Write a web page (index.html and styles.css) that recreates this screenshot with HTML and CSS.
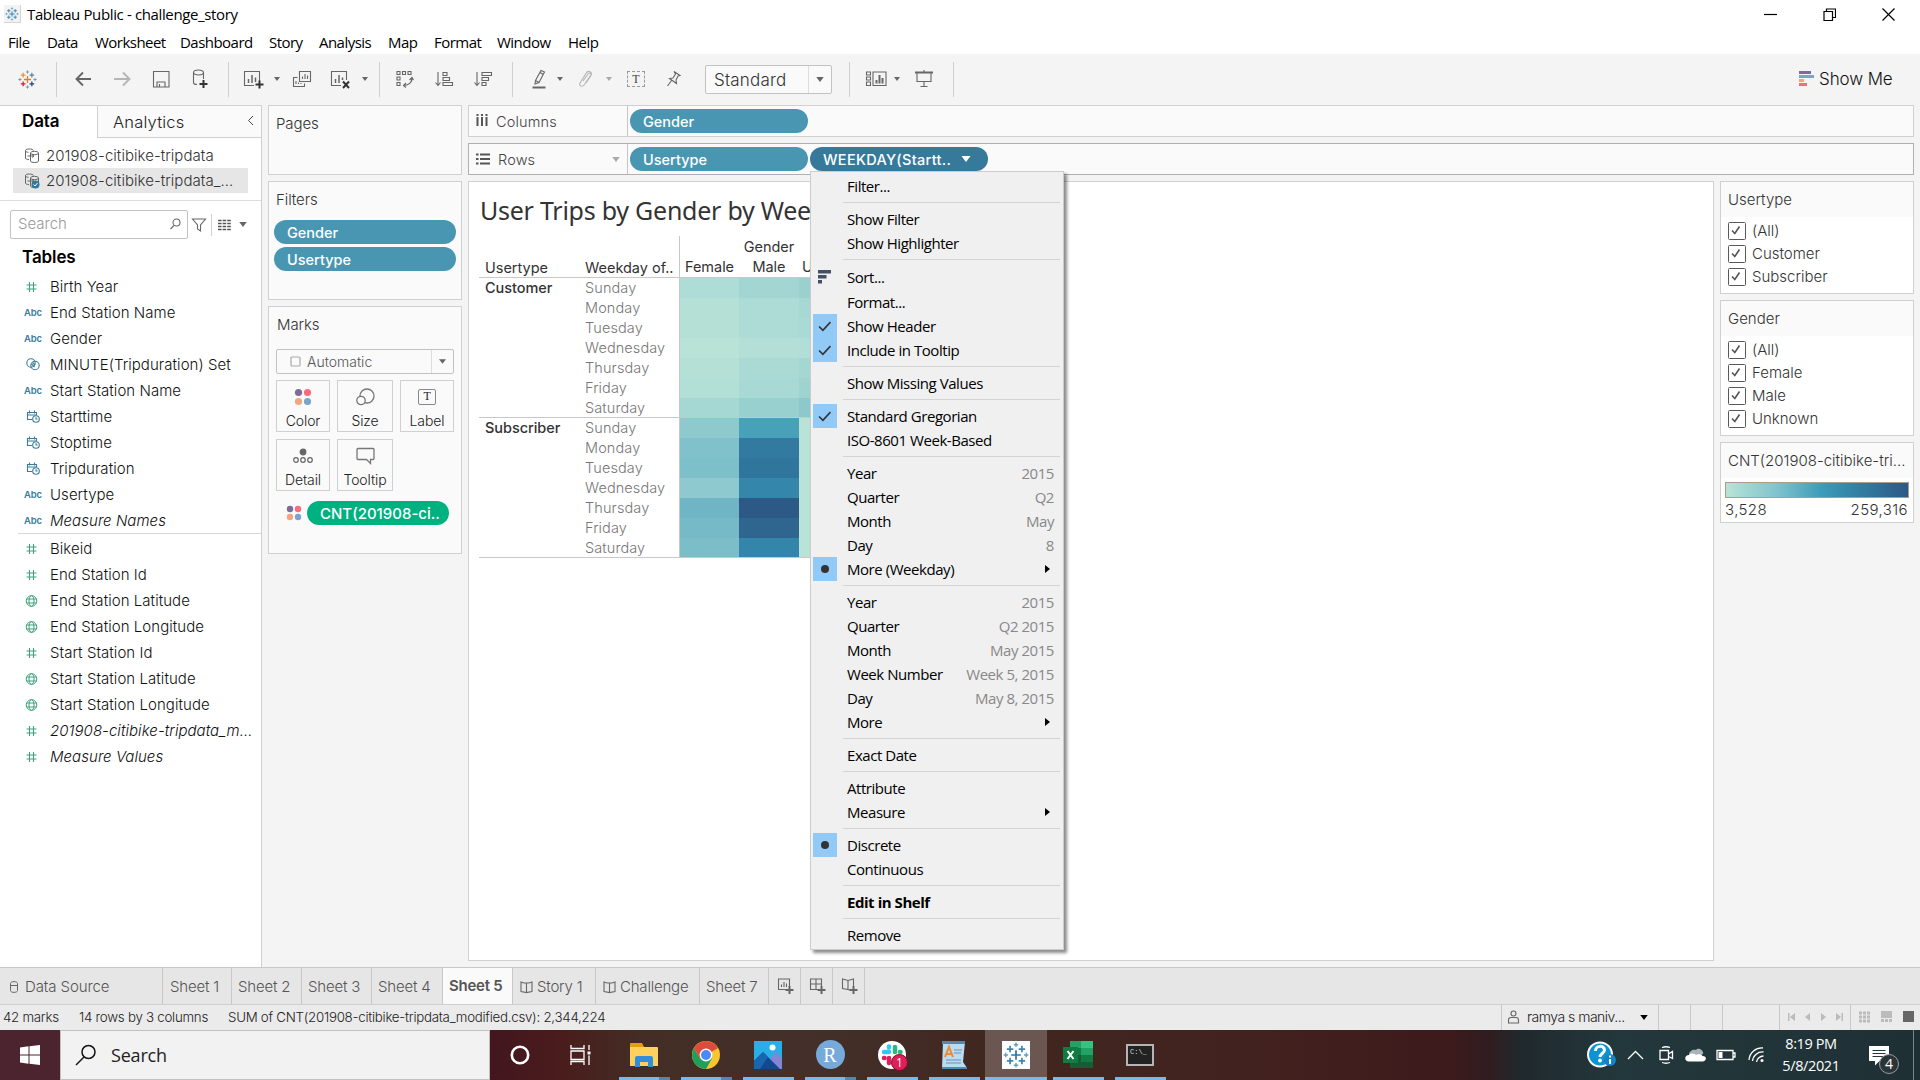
FILE: index.html
```html
<!DOCTYPE html>
<html lang="en">
<head>
<meta charset="utf-8">
<title>Tableau Public - challenge_story</title>
<link rel="stylesheet" href="styles.css">
</head>
<body>
<svg class="defs" width="0" height="0">
  <symbol id="caret" viewBox="0 0 6 4"><path d="M0 0h6L3 4z" fill="currentColor"/></symbol>
  <symbol id="hash" viewBox="0 0 12 12"><path d="M4 1v10M8 1v10M1 4h10M1 8h10" stroke="#3fa37c" stroke-width="1.1" fill="none"/></symbol>
  <symbol id="globe" viewBox="0 0 12 12"><g stroke="#3fa37c" fill="none"><circle cx="6" cy="6" r="5.300"/><ellipse cx="6" cy="6" rx="2.500" ry="5.300"/><path d="M1.200 4h9.600M1.200 8h9.600"/></g></symbol>
  <symbol id="sets" viewBox="0 0 14 13"><g stroke="#3a7c9c" fill="none" stroke-width="1.1"><circle cx="5" cy="5" r="4.2"/><circle cx="9" cy="7.5" r="4.2"/><path d="M5.500 6l3 3M6.500 4.500l2.500 2.500"/></g></symbol>
  <symbol id="datetime" viewBox="0 0 14 13"><g stroke="#3a7c9c" fill="none" stroke-width="1.1"><path d="M6 9.500H1.500V2.500h9V5M1.500 5h9M3.500 .5v3M8.500 .5v3"/><circle cx="10" cy="9" r="3.300"/><path d="M10 7.300V9h1.600"/></g></symbol>
  <symbol id="tab-logo" viewBox="0 0 24 24"><g fill="none" stroke="var(--a)" stroke-width="1.600"><path d="M12 7.500v9M7.500 12h9"/><path d="M6.500 3.500v6M3.500 6.500h6" stroke="var(--b)"/><path d="M17.500 3.500v6M14.500 6.500h6" stroke="var(--c)"/><path d="M6.500 14.500v6M3.500 17.500h6" stroke="var(--d)"/><path d="M17.500 14.500v6M14.500 17.500h6" stroke="var(--e)"/><path d="M12 .5v4M10 2.500h4M12 19.500v4M10 21.500h4M2.500 10v4M.5 12h4M21.500 10v4M19.500 12h4" stroke="var(--f)" stroke-width="1.200"/></g></symbol>
  <symbol id="source" viewBox="0 0 16 16"><g fill="none" stroke="#666" stroke-width="1"><path d="M5 12C3 12 1.500 11.500 1.500 10.500V3C1.500 1 9 1 9.500 3M1.500 3c0 1.500 2 1.800 3 1.800"/><ellipse cx="10.500" cy="5.500" rx="4" ry="1.700"/><path d="M6.500 5.500v8c0 2 8 2 8 0v-8M3.500 8.500h6M8 7l2 1.500L8 10"/></g></symbol>
  <symbol id="book" viewBox="0 0 13 14"><path d="M1 2l3 1h2.500v9.500L1 11.500zM12 2L9 3H6.500v9.500l5.500-1z" fill="none" stroke="#666" stroke-width="1.100"/></symbol>
  <symbol id="dots4" viewBox="0 0 18 18"><circle cx="4.500" cy="4.500" r="3.600" fill="#7f6b99"/><circle cx="13.500" cy="4.500" r="3.600" fill="#fb6b7e"/><circle cx="4.500" cy="13.500" r="3.600" fill="#f4a57c"/><circle cx="13.500" cy="13.500" r="3.600" fill="#7ba3cf"/></symbol>
  <symbol id="check" viewBox="0 0 12 10"><path d="M1 5l3.500 3.500L11.500 1" fill="none" stroke="#333" stroke-width="1.500"/></symbol>
  <symbol id="boxcheck" viewBox="0 0 18 18"><rect x=".5" y=".5" width="17" height="17" rx="1" fill="#fff" stroke="#595959"/><path d="M4 8.500l2.800 3L11.500 4.500" fill="none" stroke="#555" stroke-width="1.600"/></symbol>
</svg>

<header class="titlebar">
  <span class="app-icon"><svg class="logo-blue" width="14" height="16"><use href="#tab-logo"/></svg></span>
  <span class="title">Tableau Public - challenge_story</span>
  <span class="winbtns">
    <svg width="13" height="13"><path d="M0 6.500h13" stroke="#000" stroke-width="1.200"/></svg>
    <svg width="13" height="13" fill="none" stroke="#000"><path d="M1 3.500h8.500v9H1zM3.500 3.500V1h9v8.500H9.500" stroke-width="1.200"/></svg>
    <svg width="13" height="13"><path d="M.5.5l12 12M12.500.5l-12 12" stroke="#000" stroke-width="1.200"/></svg>
  </span>
</header>
<nav class="menubar"><span>File</span><span>Data</span><span>Worksheet</span><span>Dashboard</span><span>Story</span><span>Analysis</span><span>Map</span><span>Format</span><span>Window</span><span>Help</span></nav>

<div class="toolbar">
  <svg class="logo-color" width="19" height="19"><use href="#tab-logo"/></svg>
  <i class="sep"></i>
  <svg width="17" height="16" class="ic thick"><path d="M16 8H2M8 1.500L1.500 8 8 14.500"/></svg>
  <svg width="17" height="16" class="ic thick dim"><path d="M0 8h15M9 1.500L15.500 8 9 14.500"/></svg>
  <svg width="17" height="17" class="ic"><path d="M.5.500h15.500v15.500H.5zM4 16v-5h8v5M6.500 13v3"/></svg>
  <svg width="17" height="20" class="ic"><path d="M1.500 3.500v10c0 1 1.500 2 3.500 2M11.500 3.500V10"/><ellipse cx="6.500" cy="3.500" rx="5" ry="2.500"/><path d="M11.500 11v8M7.500 15h8" stroke="#333" stroke-width="2"/></svg>
  <i class="sep"></i>
  <svg width="20" height="19" class="ic"><path d="M10 15.500H.5V1.500h15V11"/><path d="M4.500 13V9M8 13V5M11.500 12V7.500" stroke-width="1.500"/><path d="M15.500 10.500v8M11.500 14.500h8" stroke="#333" stroke-width="2"/></svg>
  <svg width="6" height="4" class="caret"><use href="#caret"/></svg>
  <svg width="18" height="18" class="ic"><path d="M6.500 1.500h11v10h-11zM4.500 7.500h-4v9h11v-3M9.500 9V6.500M12 9V4M14.500 9V5.500M3 14v-3M5.500 14v-1.500M8 14v-1"/></svg>
  <svg width="20" height="19" class="ic"><path d="M10 15.500H.5V1.500h15V10"/><path d="M4.500 13V9M8 13V5M11.500 10V7.500" stroke-width="1.500"/><path d="M12 11.500l6 6.500M18 11.500L12 18" stroke="#333" stroke-width="2"/></svg>
  <svg width="6" height="4" class="caret"><use href="#caret"/></svg>
  <i class="sep"></i>
  <svg width="18" height="18" class="ic"><path d="M1 1.500h3v3H1zM6.500 1.500h3v3h-3zM12 1.500h3v3h-3zM1 7h3v3H1zM1 12.500h3v3H1zM16 8c.5 4-3 7-8 7.500M13.500 10L16 7.500l1.500 2.500M10 13l-2.500 2.500 2.500 2"/></svg>
  <svg width="19" height="16" class="ic"><path d="M3 1v13M.5 11.500L3 14.500l2.500-3M8 1.500h4v3H8zM8 6.500h6.500v3H8zM8 11.500h9.500v3H8z"/></svg>
  <svg width="19" height="16" class="ic"><path d="M3 1v13M.5 11.500L3 14.500l2.500-3M8 1.500h9.500v3H8zM8 6.500h6.500v3H8zM8 11.500h4v3H8z"/></svg>
  <i class="sep"></i>
  <svg width="16" height="20" class="ic"><path d="M4.500 11.500L10 1.500l3.500 1.500L8 13.500 4 15zM4.500 11.500L8 13.500M9 3.500l3.500 2"/><path d="M1.500 18.500h13" stroke-width="2"/></svg>
  <svg width="6" height="4" class="caret"><use href="#caret"/></svg>
  <svg width="15" height="18" class="ic dim"><path d="M5 11l5-7c1.500-2 4-.5 2.500 1.500L6 15c-2 2.500-5.500.5-4-2L8 3.500C10-.5 15 2 13 5.500L8 13"/></svg>
  <svg width="6" height="4" class="caret dim"><use href="#caret"/></svg>
  <span class="tbox">T</span>
  <svg width="16" height="18" class="ic"><path d="M8 1.500l6 4-2 .5-2 4 .5 3.500-7-5 3.500-.5 2.500-4zM5.500 10.500L1.500 16"/></svg>
  <span class="select fit"><span>Standard</span><i><svg width="8" height="5" class="caret"><use href="#caret"/></svg></i></span>
  <i class="sep"></i>
  <svg width="21" height="16" class="ic"><path d="M.5 1h4v3h-4zM.5 6h4v3h-4zM.5 11h4v3.500h-4zM7 1h13v13.500H7z"/><path d="M10.500 12.500V9M13.500 12.500V4M16.500 12.500V7" stroke-width="2"/></svg>
  <svg width="6" height="4" class="caret"><use href="#caret"/></svg>
  <svg width="18" height="18" class="ic"><path d="M0 2.500h18" stroke-width="2"/><path d="M2 3v8.500h14V3M9 12v4.500M5.500 16.500h7M9 0v2"/></svg>
  <i class="sep"></i>
  <span class="showme"><svg width="15" height="16"><path fill="#7f6b99" d="M0 0h12v3H0z"/><path fill="#7ba3cf" d="M0 4h15v3H0z"/><path fill="#f4a57c" d="M0 8h5v3H0z"/><path fill="#fb6b7e" d="M0 12h8v3H0z"/></svg>Show Me</span>
</div>

<main class="work">
  <aside class="data">
    <div class="dtabs"><b>Data</b><span>Analytics<svg width="7" height="11"><path d="M6 1L1.500 5.500 6 10" stroke="#444" fill="none"/></svg></span></div>
    <div class="sources">
      <div><svg width="16" height="17"><use href="#source"/></svg>201908-citibike-tripdata</div>
      <div class="on"><svg width="16" height="17"><use href="#source"/><circle cx="11.500" cy="12.500" r="4" fill="#2e7b9e"/><path d="M9.500 12.500l1.500 1.500 2.500-3" stroke="#fff" fill="none"/></svg>201908-citibike-tripdata_...</div>
    </div>
    <div class="find">
      <span class="search">Search<svg width="11" height="12" class="ic"><circle cx="6.500" cy="4.500" r="3.500"/><path d="M4 7.500L.5 11"/></svg></span>
      <svg width="14" height="14" class="ic"><path d="M.5 1h13L8.500 7v6l-3-2V7z"/></svg>
      <i></i>
      <svg width="13" height="12"><path d="M0 1.500h13M0 4.500h13M0 7.500h13M0 10.500h13" stroke="#555" stroke-width="1.500" stroke-dasharray="3.600 1"/></svg>
      <svg width="8" height="5" class="caret"><use href="#caret"/></svg>
    </div>
    <h2>Tables</h2>
    <ul class="fields dims">
      <li><svg><use href="#hash"/></svg>Birth Year</li>
      <li><em>Abc</em>End Station Name</li>
      <li><em>Abc</em>Gender</li>
      <li><svg class="dt"><use href="#sets"/></svg>MINUTE(Tripduration) Set</li>
      <li><em>Abc</em>Start Station Name</li>
      <li><svg class="dt"><use href="#datetime"/></svg>Starttime</li>
      <li><svg class="dt"><use href="#datetime"/></svg>Stoptime</li>
      <li><svg class="dt"><use href="#datetime"/></svg>Tripduration</li>
      <li><em>Abc</em>Usertype</li>
      <li class="gen"><em>Abc</em>Measure Names</li>
    </ul>
    <ul class="fields">
      <li><svg><use href="#hash"/></svg>Bikeid</li>
      <li><svg><use href="#hash"/></svg>End Station Id</li>
      <li><svg><use href="#globe"/></svg>End Station Latitude</li>
      <li><svg><use href="#globe"/></svg>End Station Longitude</li>
      <li><svg><use href="#hash"/></svg>Start Station Id</li>
      <li><svg><use href="#globe"/></svg>Start Station Latitude</li>
      <li><svg><use href="#globe"/></svg>Start Station Longitude</li>
      <li class="gen"><svg><use href="#hash"/></svg>201908-citibike-tripdata_m...</li>
      <li class="gen"><svg><use href="#hash"/></svg>Measure Values</li>
    </ul>
  </aside>

  <section class="cards">
    <div class="card pages"><h3>Pages</h3></div>
    <div class="card filters"><h3>Filters</h3><span class="pill">Gender</span><span class="pill">Usertype</span></div>
    <div class="card marks"><h3>Marks</h3>
      <div class="select auto"><svg width="11" height="11"><rect x="1" y="1" width="9" height="9" rx="1" fill="none" stroke="#aaa" stroke-width="1.200"/></svg><span>Automatic</span><i><svg width="7" height="5" class="caret"><use href="#caret"/></svg></i></div>
      <div class="mbtns">
        <div><svg width="18" height="18"><use href="#dots4"/></svg>Color</div>
        <div><svg width="19" height="18" fill="none" stroke="#777" stroke-width="1.300"><circle cx="11" cy="8" r="7"/><circle cx="5" cy="12.500" r="4.200" fill="#fafafa"/></svg>Size</div>
        <div><span class="tl">T</span>Label</div>
        <div><svg width="20" height="18" fill="none" stroke="#666" stroke-width="1.200"><circle cx="10" cy="5" r="2.800" fill="#666"/><circle cx="3" cy="13" r="2.300"/><circle cx="10" cy="13" r="2.300"/><circle cx="17" cy="13" r="2.300"/></svg>Detail</div>
        <div><svg width="19" height="18" fill="none" stroke="#777" stroke-width="1.300"><path d="M2 1.500h15q1 0 1 1v9q0 1-1 1h-2.500v4l-4-4H2q-1 0-1-1v-9q0-1 1-1z"/></svg>Tooltip</div>
      </div>
      <div class="enc"><svg width="16" height="16"><use href="#dots4"/></svg><span class="pill green">CNT(201908-ci..</span></div>
    </div>
  </section>

  <section class="canvas">
    <div class="shelf"><div class="name"><svg width="12" height="14"><path d="M1.500 0v2M1.500 3v9M6 0v2M6 3v9M10.500 0v2M10.500 3v9" stroke="#555" stroke-width="2"/></svg>Columns</div><span class="pill">Gender</span></div>
    <div class="shelf rows"><div class="name"><svg width="14" height="12"><path d="M0 1.500h2.500M4 1.500h10M0 6h2.500M4 6h10M0 10.500h2.500M4 10.500h10" stroke="#555" stroke-width="2"/></svg>Rows<svg width="8" height="5" class="caret dim"><use href="#caret"/></svg></div><span class="pill">Usertype</span><span class="pill dark">WEEKDAY(Startt..<svg width="10" height="6"><use href="#caret"/></svg></span></div>
    <div class="lower">
      <div class="view">
        <h1>User Trips by Gender by Wee</h1>
        <div class="viz">
          <div class="heads"><span class="h-user">Usertype</span><span class="h-week">Weekday of..</span><div class="h-gen"><b>Gender</b><span>Female</span><span>Male</span><span class="cut">U</span></div></div>
          <div class="block"><strong>Customer</strong>
            <ol><li>Sunday</li><li>Monday</li><li>Tuesday</li><li>Wednesday</li><li>Thursday</li><li>Friday</li><li>Saturday</li></ol>
            <div class="heat">
              <i style="background:#aedcd6"></i><i style="background:#a3d6d3"></i><i style="background:#9ad1cf"></i>
              <i style="background:#b5e0d6"></i><i style="background:#addbd6"></i><i style="background:#a8d8d4"></i>
              <i style="background:#b5e0d6"></i><i style="background:#addbd6"></i><i style="background:#aadad5"></i>
              <i style="background:#b9e3d7"></i><i style="background:#b3dfd6"></i><i style="background:#b1ded6"></i>
              <i style="background:#b4e0d6"></i><i style="background:#abdad5"></i><i style="background:#a4d6d2"></i>
              <i style="background:#b2dfd6"></i><i style="background:#a9d9d4"></i><i style="background:#9fd3d0"></i>
              <i style="background:#a5d8d3"></i><i style="background:#98d0cf"></i><i style="background:#8cc8cc"></i>
            </div>
          </div>
          <div class="block"><strong>Subscriber</strong>
            <ol><li>Sunday</li><li>Monday</li><li>Tuesday</li><li>Wednesday</li><li>Thursday</li><li>Friday</li><li>Saturday</li></ol>
            <div class="heat">
              <i style="background:#8ec9cd"></i><i style="background:#47a1b9"></i><i style="background:#b9e3d7"></i>
              <i style="background:#80c1cb"></i><i style="background:#327a9f"></i><i style="background:#b9e3d7"></i>
              <i style="background:#7ec0ca"></i><i style="background:#30759b"></i><i style="background:#b9e3d7"></i>
              <i style="background:#8dc9ce"></i><i style="background:#3487aa"></i><i style="background:#b9e3d7"></i>
              <i style="background:#70b5c6"></i><i style="background:#2c5985"></i><i style="background:#b9e3d7"></i>
              <i style="background:#76bac8"></i><i style="background:#2f6690"></i><i style="background:#b9e3d7"></i>
              <i style="background:#7bbeca"></i><i style="background:#3485aa"></i><i style="background:#b9e3d7"></i>
            </div>
          </div>
        </div>
      </div>
      <aside class="legends">
        <div class="legend"><h3>Usertype</h3><ul><li><svg><use href="#boxcheck"/></svg>(All)</li><li><svg><use href="#boxcheck"/></svg>Customer</li><li><svg><use href="#boxcheck"/></svg>Subscriber</li></ul></div>
        <div class="legend"><h3>Gender</h3><ul><li><svg><use href="#boxcheck"/></svg>(All)</li><li><svg><use href="#boxcheck"/></svg>Female</li><li><svg><use href="#boxcheck"/></svg>Male</li><li><svg><use href="#boxcheck"/></svg>Unknown</li></ul></div>
        <div class="legend ramp"><h3>CNT(201908-citibike-tri...</h3><div class="grad"></div><p><span>3,528</span><span>259,316</span></p></div>
      </aside>
    </div>
  </section>
</main>

<div class="sheets">
  <span><svg width="9" height="12" fill="none" stroke="#666"><path d="M.5 2.500v7c0 2.500 7 2.500 7 0v-7M.5 2.500C.5 0 7.500 0 7.500 2.500M.5 4.500h7"/></svg>Data Source</span>
  <span>Sheet 1</span><span>Sheet 2</span><span>Sheet 3</span><span>Sheet 4</span><span class="cur">Sheet 5</span>
  <span><svg width="13" height="14"><use href="#book"/></svg>Story 1</span><span><svg width="13" height="14"><use href="#book"/></svg>Challenge</span><span>Sheet 7</span>
  <span><svg width="16" height="17" class="ic"><path d="M8 11.500H.5V1h11v7M3.500 9V6.500M6 9V4M8.500 9V5.500"/><path d="M11.500 8v8M7.500 12h8" stroke-width="2"/></svg></span>
  <span><svg width="16" height="17" class="ic"><path d="M8 11.500H.5V1h11v7M.5 6h11M6 1v10.500"/><path d="M11.500 8v8M7.500 12h8" stroke-width="2"/></svg></span>
  <span><svg width="16" height="17" class="ic"><path d="M8 12l-2-.5L.5 10.500V1L6 2.500 11.500 1v7M6 2.500v9"/><path d="M11.500 8v8M7.500 12h8" stroke-width="2"/></svg></span>
</div>
<div class="status">
  <span>42 marks</span><span>14 rows by 3 columns</span><span class="sum">SUM of CNT(201908-citibike-tripdata_modified.csv): 2,344,224</span>
  <span class="cell user"><svg width="11" height="14" class="ic"><circle cx="5.500" cy="3.500" r="2.500"/><path d="M.5 13V10q0-2.500 2.500-2.500h5q2.500 0 2.500 2.500v3z"/></svg>ramya s maniv...<svg width="8" height="5"><use href="#caret"/></svg></span>
  <span class="cell"></span><span class="cell"></span><span class="cell"></span>
  <span class="cell nav"><svg width="56" height="10" fill="#bbb"><path d="M0 1h1.500v8H0zM7 1v8L2 5zM22 1v8l-5-4zM33 1v8l5-4zM48 1v8l5-4zM53.500 1H55v8h-1.500z"/></svg></span>
  <span class="cell modes"><svg width="56" height="12"><path d="M1 2h11M1 6h11M1 10h11" stroke="#bbb" stroke-width="3" stroke-dasharray="3 1"/><path fill="#bbb" d="M23 0h11v7H23zM23 8h3v3h-3zM27 8h3v3h-3zM31 8h3v3h-3z"/><path fill="#666" d="M45 0h11v11H45z"/></svg></span>
</div>

<footer class="taskbar">
  <div class="start"><svg width="20" height="20" fill="#fff"><path d="M0 2.500l8.500-1.200v8.200H0zM9.500 1.200L20 0v9.500H9.500zM0 10.500h8.500v8.200L0 17.500zM9.500 10.500H20V20L9.500 18.800z"/></svg></div>
  <div class="wsearch"><svg width="22" height="22" fill="none" stroke="#111" stroke-width="1.500"><circle cx="13.500" cy="8" r="6.500"/><path d="M9 13l-8 8"/></svg>Search</div>
  <div class="apps">
    <div class="plain"><svg width="20" height="20"><circle cx="10" cy="10" r="8.200" fill="none" stroke="#fff" stroke-width="2.600"/></svg></div>
    <div class="plain"><svg width="22" height="20" fill="none" stroke="#fff" stroke-width="1.300"><path d="M1 0v3.500h13V0M1 6h13v8.500H1zM1 20v-3.500h13V20M19 0v5M19 10.500V20"/><path d="M17.500 6.500h3v3h-3z" fill="#fff" stroke="none"/></svg></div>
    <div class="more"><svg width="28" height="28"><path fill="#e2a00c" d="M0 3q0-1 1-1h11l2 4H0z"/><path fill="#fdd15b" d="M0 6h27q1 0 1 1v18H0z"/><path fill="#2f8fdc" d="M5 26V17q0-2 2-2h14q2 0 2 2v9h-5v-5h-8v5z"/></svg></div>
    <div class="more"><svg width="28" height="28"><circle cx="14" cy="14" r="14" fill="#f9c62e"/><path d="M14 14L1.900 7A14 14 0 0 1 26.100 7z" fill="#dd4b3e"/><path d="M1.900 7A14 14 0 0 0 14 28l6-10.500L8 17.500z" fill="#1fa05a"/><path d="M1.900 7L8 17.500 14 7z" fill="#dd4b3e"/><circle cx="14" cy="14" r="6.400" fill="#fff"/><circle cx="14" cy="14" r="5" fill="#4a8af4"/></svg></div>
    <div><svg width="28" height="28"><path fill="#2aaee8" d="M0 0h28v28H0z"/><path fill="#8685d4" d="M14 21l8-10 6 7v10H14z"/><path fill="#12488f" d="M0 20l9-9 17 17H0z"/><path fill="#1a65b0" d="M0 20l9-9 5 5-8 12H0z"/><circle cx="18.500" cy="6.500" r="3" fill="#fff"/></svg></div>
    <div class="more"><span class="rlogo">R</span></div>
    <div class="slack"><svg width="28" height="28"><circle cx="14" cy="14" r="14" fill="#fff"/><g stroke-width="4.500" stroke-linecap="round"><path d="M6 11h5M11 5.500v1" stroke="#36c5f0"/><path d="M17 6v5M22 11h.5" stroke="#2eb67d"/><path d="M6 17h.5M11 17v5" stroke="#e01e5a"/><path d="M17 17h5" stroke="#ecb22e"/></g></svg><span>1</span></div>
    <div><svg width="26" height="28"><path fill="#b9dcf2" d="M2 1h22l-2 20 4 6H1z"/><path fill="#5288b5" d="M1 0h23v3H1zM1 26h25v2H1z"/><path fill="none" stroke="#6f8fb0" d="M13 9h8M13 12h7M5 19h15M5 22h15"/><path fill="none" stroke="#f08a2c" stroke-width="2" d="M4 16L8 6l4 10M5.500 13h5"/></svg></div>
    <div class="active"><svg class="logo-blue tile" width="28" height="28" viewBox="-1 -1 26 26"><use href="#tab-logo" width="24" height="24"/></svg></div>
    <div><svg width="30" height="28"><path fill="#21a366" d="M7 0h12v7H7z"/><path fill="#33c481" d="M18 0h12v7H18z"/><path fill="#107c41" d="M7 7h12v7H7z"/><path fill="#21a366" d="M18 7h12v7H18z"/><path fill="#185c37" d="M7 14h23v13H7z"/><path fill="#107c41" d="M18 14h12v7H18zM0 6h15v16H0z"/><path d="M4.500 10l6 8M10.500 10l-6 8" stroke="#fff" stroke-width="2"/></svg></div>
    <div><span class="cmd">C:\_</span></div>
  </div>
  <div class="tray">
    <svg width="30" height="28"><circle cx="13" cy="13.500" r="13" fill="#fff"/><circle cx="13" cy="13.500" r="11" fill="#0c93d4"/><path d="M8.500 10c0-6 9-6 9-1 0 3.500-4.500 3.500-4.500 7" fill="none" stroke="#fff" stroke-width="3"/><circle cx="13" cy="19.500" r="1.900" fill="#fff"/><circle cx="23" cy="19" r="6" fill="#1383c4"/><path d="M23 18v5M23 14.500v2" stroke="#fff" stroke-width="2"/></svg>
    <svg width="17" height="10" class="wh"><path d="M1 9l7.500-7.500L16 9"/></svg>
    <svg width="15" height="18" class="wh"><path d="M1 4.500h8.500v9H1zM9.500 8l4-2.500v7l-4-2M3 1.500q4-1.500 8 0M3 16.500q4 1.500 8 0"/></svg>
    <svg width="21" height="14"><path fill="#a9b3b5" d="M4 7c0-4 4-6 7-5 2-3 8 0 7 4l-7 3z"/><path fill="#fff" d="M4 13.500c-5 0-5-6.500 0-6.500 3-3 6-1 7 0l3-1c2 0 3 1 3.500 2 5 0 4 5.500 0 5.500z"/></svg>
    <svg width="20" height="12" class="wh"><path d="M1 1.500h16v9H1zM17.500 4h1.500v4h-1.500"/><path fill="#fff" d="M2.500 3h4v6h-4z" stroke="none"/></svg>
    <svg width="17" height="16" class="wh"><path d="M1 13A13 13 0 0 1 15 1M4.500 14A10 10 0 0 1 15.500 5M8.500 15A7 7 0 0 1 15.500 9"/><circle cx="14" cy="13.500" r="1.500" fill="#fff" stroke="none"/></svg>
    <div class="clock"><span>8:19 PM</span><span>5/8/2021</span></div>
    <div class="note"><svg width="20" height="20"><path fill="#fff" d="M0 0h20v15h-9.500L6 19.500V15H0z"/><path d="M3.500 4.500h13M3.500 7.500h13M3.500 10.500h13" stroke="#22383b"/></svg><span>4</span></div>
    <i></i>
  </div>
</footer>

<div class="ctx">
  <div>Filter...</div><hr>
  <div>Show Filter</div><div>Show Highlighter</div><hr>
  <div class="tall"><svg class="sorticon" width="14" height="14"><path fill="#445066" d="M0 0h13v3.500H0zM0 5h8.500v3.500H0zM0 10h4v3.500H0z"/></svg>Sort...</div><div>Format...</div>
  <div><i><svg width="13" height="11"><use href="#check"/></svg></i>Show Header</div><div><i><svg width="13" height="11"><use href="#check"/></svg></i>Include in Tooltip</div><hr>
  <div>Show Missing Values</div><hr>
  <div><i><svg width="13" height="11"><use href="#check"/></svg></i>Standard Gregorian</div><div>ISO-8601 Week-Based</div><hr>
  <div>Year<span>2015</span></div><div>Quarter<span>Q2</span></div><div>Month<span>May</span></div><div>Day<span>8</span></div>
  <div><i class="dot"></i>More (Weekday)<svg class="sub" width="5" height="8"><path d="M0 0l5 4-5 4z"/></svg></div><hr>
  <div>Year<span>2015</span></div><div>Quarter<span>Q2 2015</span></div><div>Month<span>May 2015</span></div><div>Week Number<span>Week 5, 2015</span></div><div>Day<span>May 8, 2015</span></div>
  <div>More<svg class="sub" width="5" height="8"><path d="M0 0l5 4-5 4z"/></svg></div><hr>
  <div>Exact Date</div><hr>
  <div>Attribute</div><div>Measure<svg class="sub" width="5" height="8"><path d="M0 0l5 4-5 4z"/></svg></div><hr>
  <div><i class="dot"></i>Discrete</div><div>Continuous</div><hr>
  <div><b>Edit in Shelf</b></div><hr>
  <div>Remove</div>
</div>
</body>
</html>
```

FILE: styles.css
```css
* { box-sizing: border-box; }
html, body { margin: 0; width: 1920px; height: 1080px; overflow: hidden; }
body { display: flex; flex-direction: column; background: #fff; color: #333; font: 300 15px/20px Inter, "Noto Sans", sans-serif; position: relative; }
h1, h2, h3, ul, ol, p { margin: 0; padding: 0; list-style: none; font-weight: inherit; }
svg { display: block; flex: none; }
.defs { position: absolute; }
i, em { font-style: normal; }
span, div, li, b { white-space: nowrap; }

/* window chrome */
.titlebar, .menubar, .ctx, .wsearch, .clock { font-family: "Open Sans", "Noto Sans", sans-serif; font-weight: 400; color: #000; }
.titlebar { height: 29px; display: flex; align-items: center; padding: 0 0 1px 4px; font-size: 15px; letter-spacing: -.37px; }
.app-icon { width: 17px; height: 18px; background: #f2f2f2; border: 1px solid #d5d5d5; border-width: 0 1px 1px 0; padding: 1px; margin-right: 6px; }
.winbtns { margin-left: auto; display: flex; gap: 46px; padding-right: 25px; }
.menubar { height: 25px; display: grid; grid-template-columns: 39px 48px 85px 89px 50px 69px 46px 63px 71px 60px; align-items: center; padding: 1px 0 0 8px; font-size: 15px; letter-spacing: -.53px; }
.logo-blue { --a: #2e76a8; --b: #3d87b2; --c: #3d87b2; --d: #3d87b2; --e: #3d87b2; --f: #5e9cc0; }
.logo-color { --a: #e8762c; --b: #eb912c; --c: #59879b; --d: #c72035; --e: #1f447e; --f: #7199a6; }
.tile { background: #fff; }

/* toolbar */
.toolbar { height: 51px; flex: none; background: #f4f4f4; display: grid; align-items: center; justify-items: start; padding-left: 18px; padding-bottom: 1px; grid-template-columns: 38px 19px 39px 39px 39px 36px 16px 30px 19px 38px 31px 17px 17px 39px 39px 38px 19px 26px 21px 28px 21px 39px 39px 144px 17px 28px 21px 38px 845px 1fr; }
.toolbar .sep { width: 1px; height: 35px; background: #cfcfcf; }
.ic { fill: none; stroke: #666; stroke-width: 1.1; overflow: visible; }
.thick { stroke-width: 1.9; }
.ic.dim { stroke: #b5b5b5; }
.caret { color: #666; }
.caret.dim { color: #aaa; }
.tbox { width: 18px; height: 16px; border: 1px dashed #999; display: grid; place-items: center; font: 12px/12px "Liberation Serif", serif; color: #444; }
.select { display: flex; align-items: center; background: #fafafa; border: 1px solid #c2c2c2; border-radius: 2px; }
.select i { margin-left: auto; border-left: 1px solid #ddd; height: 100%; display: grid; place-items: center; }
.fit { width: 127px; height: 29px; font-size: 17px; padding-left: 8px; letter-spacing: .2px; }
.fit span { margin-top: 1px; }
.fit i { width: 23px; }
.showme { display: flex; align-items: center; gap: 5px; font-size: 17px; letter-spacing: -.1px; color: #111; padding-left: 1px; }

/* work area */
.work { height: 862px; flex: none; display: flex; background: #f4f4f4; }
.data { width: 262px; background: #fff; border-right: 1px solid #d0d0d0; border-top: 1px solid #d0d0d0; }
.dtabs { display: flex; height: 32px; color: #000; }
.dtabs b { width: 97px; padding: 5px 0 0 22px; font-size: 17px; font-weight: 600; letter-spacing: -.1px; }
.dtabs span { flex: 1; border: 1px solid #d0d0d0; border-width: 0 0 1px 1px; background: #fafafa; padding: 0 7px 0 15px; display: flex; justify-content: space-between; align-items: center; font-size: 16.500px; letter-spacing: .2px; color: #222; }
.dtabs svg { margin-top: -3px; }
.sources { padding: 5px 13px 7px; border-bottom: 1px solid #ddd; height: 63px; font-size: 15px; color: #333; }
.sources div { height: 25px; display: flex; align-items: center; gap: 6px; padding-left: 11px; letter-spacing: .04px; }
.sources .on { background: #e6e6e6; }
.find { display: flex; align-items: center; padding: 9px 0 0 10px; height: 38px; }
.search { width: 178px; height: 29px; border: 1px solid #c2c2c2; border-radius: 2px; display: flex; align-items: center; justify-content: space-between; padding: 0 6px 1px 7px; color: #999; margin-right: 4px; }
.find i { width: 1px; height: 22px; background: #d0d0d0; margin: 0 6px 0 5px; }
.find .caret { margin-left: 8px; }
.data h2 { font-size: 17px; font-weight: 600; color: #000; padding: 8px 0 0 22px; height: 34px; letter-spacing: -.1px; }
.fields { color: #111; font-size: 15px; letter-spacing: .05px; }
.dims { margin-left: 18px; border-bottom: 1px solid #d8d8d8; }
.dims li { padding-left: 5px; }
.fields li { height: 26px; display: flex; align-items: center; padding-top: 1px; }
.fields:not(.dims) li { padding-left: 23px; }
.fields:not(.dims) { padding-top: 1px; }
.fields svg { width: 13px; height: 12px; margin: 0 12px 0 2px; }
.fields svg.dt { width: 14px; height: 13px; margin-right: 10px; margin-left: 3px; }
.fields em { width: 27px; padding-left: 1px; font: 600 9.500px/12px Inter, sans-serif; color: #3a7c9c; letter-spacing: -.2px; }
.fields .gen { font-style: italic; }

.cards { width: 206px; padding-left: 6px; display: flex; flex-direction: column; gap: 6px; }
.card { width: 194px; background: #fafafa; border: 1px solid #d0d0d0; padding: 0 6px; }
.card h3 { padding: 8px 0 0 1px; font-size: 15px; letter-spacing: -.1px; height: 38px; }
.pages { height: 70px; }
.filters { height: 119px; }
.marks { height: 248px; padding: 0 7px; }
.pill { display: flex; align-items: center; height: 24px; border-radius: 12px; background: #4996b2; color: #fff; font-weight: 500; font-size: 14.5px; padding-left: 13px; padding-top: 1px; margin-bottom: 3px; margin-left: -1px; }
.filters .pill { margin-right: -1px; }
.auto { height: 25px; margin-top: 4px; padding-left: 13px; gap: 6px; font-size: 14px; color: #555; }
.auto i { width: 22px; }
.mbtns { display: grid; grid-template-columns: 54px 56px 54px; gap: 7px; margin-top: 6px; }
.mbtns div { height: 52px; border: 1px solid #d0d0d0; display: flex; flex-direction: column; align-items: center; justify-content: space-between; padding: 7px 0 0; font-size: 14px; color: #222; letter-spacing: -.1px; }
.tl { width: 18px; height: 16px; margin-top: 1px; border: 1.500px solid #888; border-radius: 2px; font: 12px/13px "Liberation Serif", serif; text-align: center; }
.enc { display: flex; align-items: center; padding: 10px 0 0 10px; gap: 5px; }
.green { background: #00b180; width: 142px; margin: 0; font-size: 15px; }

.canvas { flex: 1; padding-right: 6px; display: flex; flex-direction: column; gap: 6px; }
.shelf { height: 32px; background: #fafafa; border: 1px solid #d0d0d0; display: flex; align-items: center; }
.shelf.rows { border-color: #b0b0b0; }
.shelf .name { width: 159px; height: 100%; border-right: 1px solid #c5c5c5; display: flex; align-items: center; padding-left: 7px; padding-top: 1px; gap: 8px; color: #444; font-size: 14.5px; letter-spacing: .15px; }
.shelf .name .caret { margin-left: auto; margin-right: 7px; }
.shelf .name svg:first-child { margin-top: -2px; }
.shelf .rows svg:first-child { margin-top: -3px; }
.shelf .pill { width: 178px; margin: 0 0 0 2px; }
.pill.dark { background: #36799b; letter-spacing: .3px; }
.pill.dark svg { margin-left: auto; margin-right: 17px; margin-top: -2px; }
.lower { flex: 1; display: flex; gap: 6px; min-height: 0; }
.view { width: 1246px; height: 780px; background: #fff; border: 1px solid #d0d0d0; padding: 11px 10px; }
.view h1 { font: 400 25px/34px "Noto Sans", sans-serif; color: #333; padding-left: 1px; letter-spacing: -.25px; height: 44px; }
.viz { width: 381px; font-size: 14.5px; }
.heads { display: flex; height: 41px; border-bottom: 1px solid #c8c8c8; align-items: flex-end; font-weight: 400; letter-spacing: -.02px; }
.h-user { width: 106px; padding-left: 6px; position: relative; top: 1px; }
.h-week { width: 94px; position: relative; top: 1px; }
.h-gen { width: 181px; height: 41px; border-left: 1px solid #c8c8c8; display: grid; grid-template: 20px 20px / 59px 60px 61px; text-align: center; padding-top: 1px; }
.h-gen b { grid-column: 1 / 4; font-weight: 400; padding-right: 2px; }
.h-gen .cut { text-align: left; padding-left: 3px; }
.block { display: flex; border-bottom: 1px solid #c8c8c8; height: 140px; }
.block strong { width: 106px; padding-left: 6px; font-weight: 500; letter-spacing: -.05px; }
.block ol { width: 94px; color: #777; letter-spacing: .1px; }
.block li, .block strong { height: 20px; line-height: 20px; }
.heat { display: grid; grid-template-columns: 59px 60px 61px; grid-auto-rows: 20px; border-left: 1px solid #c8c8c8; height: 139px; overflow: hidden; }

.legends { flex: 1; display: flex; flex-direction: column; gap: 6px; }
.legend { background: #fff; border: 1px solid #d0d0d0; padding-bottom: 4px; }
.legend h3 { background: #fafafa; height: 35px; padding: 8px 0 0 7px; font-size: 15px; margin-bottom: 3px; }
.legend li { height: 23px; display: flex; align-items: center; gap: 6px; padding: 0 0 1px 7px; font-size: 15px; }
.legend svg { width: 18px; height: 18px; }
.ramp { height: 81px; }
.grad { height: 16px; margin: 4px 4px 2px; border: 1px solid #a59f8c; background: linear-gradient(90deg, #b9e3d7, #80c3cd 28%, #3f9cb8 52%, #358bac 64%, #2c5985); }
.ramp p { display: flex; justify-content: space-between; padding: 0 5px 0 4px; letter-spacing: .4px; }

/* sheet tabs and status */
.sheets { height: 37px; flex: none; display: grid; grid-template-columns: 163px 69px 70px 70px 71px 70px 83px 104px 69px 32px 32px 32px; background: #e6e6e6; border-top: 1px solid #c8c8c8; font-size: 15px; letter-spacing: -.2px; color: #555; }
.sheets span { border-right: 1px solid #c8c8c8; display: flex; align-items: center; padding-left: 6px; padding-top: 1px; gap: 4px; }
.sheets span:first-child { padding-left: 10px; gap: 6px; letter-spacing: -.1px; }
.sheets span:nth-child(2) { padding-left: 7px; }
.sheets span:nth-child(7), .sheets span:nth-child(8) { padding-left: 7px; }
.sheets span:nth-child(n+10) { padding-left: 9px; }
.sheets .cur { background: #fafafa; font-weight: 600; letter-spacing: -.25px; padding-top: 0; }
.status { height: 26px; flex: none; display: grid; grid-template-columns: 76px 149px 1273px 157px 32px 32px 57px 71px 1fr; align-items: center; padding-left: 3px; background: #ebebeb; border-top: 1px solid #cfcfcf; color: #222; font-size: 13.300px; letter-spacing: -.26px; line-height: 18px; }
.status > span:not(.cell) { padding-bottom: 1px; }
.cell { border-left: 1px solid #c8c8c8; height: 25px; display: flex; align-items: center; padding-bottom: 1px; }
.user { padding: 0 10px 1px 6px; gap: 8px; font-size: 14px; letter-spacing: -.5px; }
.user svg:last-child { margin-left: auto; color: #000; }
.nav { padding-left: 8px; }
.modes { padding-left: 7px; }

/* taskbar */
.taskbar { height: 50px; flex: none; display: flex; background: linear-gradient(90deg, #4b2430 0, #4b2430 60px, #42161f 490px, #4a1c1c 560px, #432d24 640px, #44302a 800px, #40271f 1000px, #42221f 1250px, #3c1a1c 1450px, #301d20 1490px, #20292d 1520px, #23383c 1620px, #1f3035 1920px); color: #fff; }
.start { width: 60px; display: grid; place-items: center; }
.wsearch { width: 430px; background: #f2f2f2; border: 1px solid #c0c0c0; color: #222; display: flex; align-items: center; gap: 14px; padding-left: 14px; font-size: 18px; letter-spacing: -.2px; }
.apps { display: grid; grid-template-columns: 61px 62px repeat(9, 62px); width: 682px; }
.apps div { position: relative; display: grid; place-items: center; width: 62px; border-bottom: 3px solid transparent; padding-top: 2px; }
.apps div::after { content: ""; position: absolute; left: 6px; bottom: -3px; height: 3px; width: 51px; background: #76b9ed; }
.apps .more::after { background: linear-gradient(90deg, #76b9ed 40px, #5587ae 40px); }
.apps .plain::after { display: none; }
.apps .plain { width: 60px; }
.apps .active { background: #6b5651; }
.apps .active::after { left: 0; width: 62px; }
.rlogo { width: 29px; height: 29px; border-radius: 50%; background: #75aadb; display: grid; place-items: center; font: 20px/20px "Liberation Serif", serif; }
.slack span { position: absolute; left: 30px; top: 24px; width: 17px; height: 17px; border-radius: 50%; background: #e01e5a; border: 1px solid #701030; font: 12px/15px "Open Sans", sans-serif; text-align: center; }
.cmd { width: 28px; height: 22px; background: #222; border: 2px solid #b5b5b5; font: 7px/8px "Liberation Mono", monospace; padding: 2px; color: #ddd; }
.tray { margin-left: auto; width: 334px; padding-left: 1px; display: grid; grid-template-columns: 40px 32px 26px 31px 32px 18px 90px 44px 1fr; align-items: center; }
.wh { fill: none; stroke: #fff; stroke-width: 1.3; }
.clock { display: flex; flex-direction: column; align-items: center; color: #fff; font-size: 14.500px; line-height: 22px; letter-spacing: -.38px; padding-bottom: 1px; }
.note { position: relative; padding-top: 1px; padding-left: 13px; }
.note span { position: absolute; left: 23px; top: 9px; width: 20px; height: 20px; border-radius: 50%; background: #2b3436; border: 1px solid #99a; font: 14px/18px "Open Sans", sans-serif; text-align: center; }
.tray > i { height: 50px; width: 1px; background: #7b8689; margin-left: 13px; }

/* field context menu */
.ctx { position: absolute; left: 810px; top: 171px; width: 254px; height: 779px; background: #f0f0f0; border: 1px solid #ccc; box-shadow: 3px 3px 3px rgba(0,0,0,.45); padding: 3px 2px; font-size: 15px; letter-spacing: -.45px; }
.ctx > div { height: 24px; display: flex; align-items: center; padding: 0 7px 2px 34px; position: relative; }
.ctx > .tall { height: 26px; }
.ctx hr { border: 0; height: 1px; background: #d4d4d4; margin: 3px 1px 5px 30px; }
.ctx span { margin-left: auto; color: #888; }
.ctx i { position: absolute; left: 0; top: -1px; width: 24px; height: 24px; background: #91c9f7; display: grid; place-items: center; padding-right: 1px; }
.ctx .dot::before { content: ""; width: 8px; height: 8px; border-radius: 50%; background: #333; }
.ctx .sub { margin-left: auto; margin-right: 4px; }
.sorticon { position: absolute; left: 5px; top: 5px; }
```
